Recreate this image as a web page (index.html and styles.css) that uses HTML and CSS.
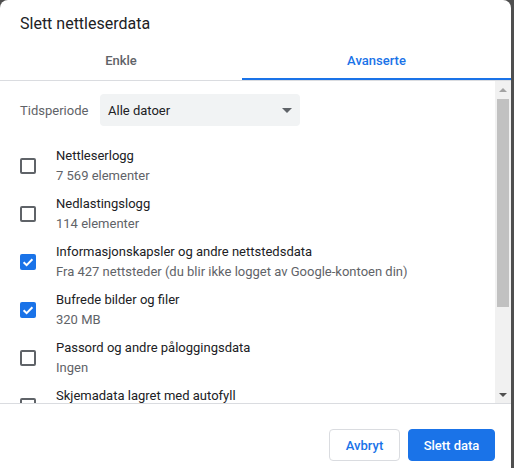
FILE: index.html
```html
<!DOCTYPE html>
<html lang="no">
<head>
<meta charset="utf-8">
<link rel="stylesheet" href="styles.css">
</head>
<body>
<div class="dialog">
  <div class="title">Slett nettleserdata</div>
  <div class="tabs">
    <div class="tab tab-basic">Enkle</div>
    <div class="tab tab-active">Avanserte</div>
  </div>
  <div class="body">
    <div class="content">
      <div class="period">
        <span class="period-label">Tidsperiode</span>
        <div class="select">
          <span>Alle datoer</span>
          <span class="caret"></span>
        </div>
      </div>
      <div class="row">
        <span class="cb"></span>
        <div class="texts"><div class="t1">Nettleserlogg</div><div class="t2">7 569 elementer</div></div>
      </div>
      <div class="row">
        <span class="cb"></span>
        <div class="texts"><div class="t1">Nedlastingslogg</div><div class="t2">114 elementer</div></div>
      </div>
      <div class="row">
        <span class="cb checked"><svg viewBox="0 0 16 16" width="16" height="16"><path d="M3.6 8.2 L6.6 11.1 L12.4 5.2" fill="none" stroke="#fff" stroke-width="2"/></svg></span>
        <div class="texts"><div class="t1">Informasjonskapsler og andre nettstedsdata</div><div class="t2">Fra 427 nettsteder (du blir ikke logget av Google-kontoen din)</div></div>
      </div>
      <div class="row">
        <span class="cb checked"><svg viewBox="0 0 16 16" width="16" height="16"><path d="M3.6 8.2 L6.6 11.1 L12.4 5.2" fill="none" stroke="#fff" stroke-width="2"/></svg></span>
        <div class="texts"><div class="t1">Bufrede bilder og filer</div><div class="t2">320 MB</div></div>
      </div>
      <div class="row">
        <span class="cb"></span>
        <div class="texts"><div class="t1">Passord og andre påloggingsdata</div><div class="t2">Ingen</div></div>
      </div>
      <div class="row">
        <span class="cb"></span>
        <div class="texts"><div class="t1">Skjemadata lagret med autofyll</div><div class="t2">&nbsp;</div></div>
      </div>
    </div>
    <div class="scrollbar">
      <div class="sb-btn"><span class="arrow-up"></span></div>
      <div class="sb-track"><div class="sb-thumb"></div></div>
      <div class="sb-btn"><span class="arrow-down"></span></div>
    </div>
  </div>
  <div class="footer">
    <button class="btn btn-cancel">Avbryt</button>
    <button class="btn btn-primary">Slett data</button>
  </div>
</div>
</body>
</html>
```
FILE: styles.css
```css
html, body {
  margin: 0;
  padding: 0;
}
body {
  background: #4f4f4f;
  width: 514px;
  height: 468px;
  overflow: hidden;
  font-family: Roboto, "Liberation Sans", sans-serif;
}
.dialog {
  width: 511px;
  height: 468px;
  background: #fff;
  border-radius: 8px 8px 0 0;
  display: flex;
  flex-direction: column;
}
.title {
  height: 44px;
  box-sizing: border-box;
  padding: 14px 0 0 20px;
  font-size: 16px;
  line-height: 20px;
  color: #202124;
}
.tabs {
  display: flex;
  height: 36px;
  border-bottom: 1px solid #dadce0;
}
.tab {
  box-sizing: border-box;
  height: 36px;
  line-height: 34px;
  text-align: center;
  font-size: 13px;
  font-weight: 500;
}
.tab-basic {
  width: 242px;
  color: #5f6368;
}
.tab-active {
  flex: 1;
  color: #1a73e8;
  border-bottom: 2px solid #1a73e8;
}
.body {
  display: flex;
  height: 322px;
  border-bottom: 1px solid #dadce0;
}
.content {
  flex: 1;
  overflow: hidden;
  padding-top: 13px;
}
.period {
  display: flex;
  align-items: center;
  padding-left: 20px;
  margin-bottom: 16px;
}
.period-label {
  width: 80px;
  font-size: 13px;
  color: #5f6368;
}
.select {
  width: 200px;
  height: 32px;
  box-sizing: border-box;
  background: #f1f3f4;
  border-radius: 4px;
  display: flex;
  align-items: center;
  justify-content: space-between;
  padding: 0 8px;
  font-size: 13px;
  color: #202124;
}
.caret {
  width: 0;
  height: 0;
  border-left: 5px solid transparent;
  border-right: 5px solid transparent;
  border-top: 5px solid #5f6368;
}
.row {
  display: flex;
  align-items: center;
  height: 48px;
  padding-left: 20px;
}
.cb {
  width: 16px;
  height: 16px;
  box-sizing: border-box;
  border: 2px solid #5f6368;
  border-radius: 2px;
  flex: none;
  margin-right: 20px;
}
.cb.checked {
  border: none;
  background: #1a73e8;
  display: flex;
}
.texts {
  font-size: 13px;
  line-height: 20px;
}
.t1 {
  color: #202124;
}
.t2 {
  color: #5f6368;
}
.scrollbar {
  width: 16px;
  background: #f1f1f1;
  display: flex;
  flex-direction: column;
}
.sb-btn {
  height: 17px;
  display: flex;
  align-items: center;
  justify-content: center;
}
.arrow-up {
  width: 0;
  height: 0;
  border-left: 4px solid transparent;
  border-right: 4px solid transparent;
  border-bottom: 4px solid #a3a3a3;
}
.arrow-down {
  width: 0;
  height: 0;
  border-left: 4px solid transparent;
  border-right: 4px solid transparent;
  border-top: 4px solid #505050;
}
.sb-track {
  flex: 1;
  padding: 1px 2px 0;
}
.sb-thumb {
  height: 208px;
  background: #c1c1c1;
}
.footer {
  flex: 1;
  display: flex;
  justify-content: flex-end;
  align-items: flex-start;
  gap: 8px;
  padding: 25px 16px 0 0;
}
.btn {
  height: 32px;
  padding: 0;
  border-radius: 4px;
  font-family: Roboto, "Liberation Sans", sans-serif;
  font-size: 13px;
  font-weight: 500;
  text-align: center;
  cursor: pointer;
}
.btn-cancel {
  width: 71px;
  background: #fff;
  color: #1a73e8;
  border: 1px solid #dadce0;
}
.btn-primary {
  width: 87px;
  background: #1a73e8;
  color: #fff;
  border: 1px solid #1a73e8;
}
```
